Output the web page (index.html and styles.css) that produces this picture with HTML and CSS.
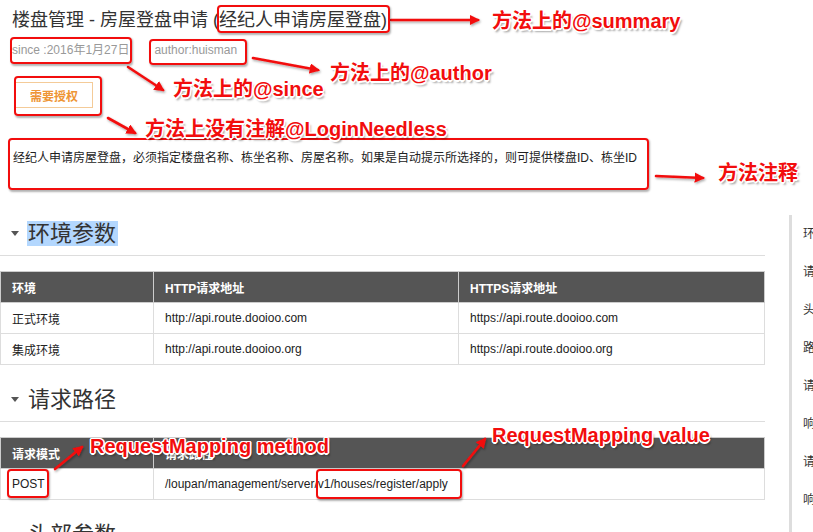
FILE: index.html
```html
<!DOCTYPE html>
<html lang="zh">
<head>
<meta charset="utf-8">
<title>楼盘管理 - 房屋登盘申请</title>
<link rel="stylesheet" href="styles.css">
</head>
<body>
<div class="page">
  <header class="head">
    <h1 class="title">楼盘管理 - 房屋登盘申请 (经纪人申请房屋登盘)</h1>
    <div class="meta"><span>since :2016年1月27日</span><span>author:huisman</span></div>
    <div class="auth"><span class="auth-btn">需要授权</span></div>
    <p class="desc">经纪人申请房屋登盘，必须指定楼盘名称、栋坐名称、房屋名称。如果是自动提示所选择的，则可提供楼盘ID、栋坐ID</p>
  </header>

  <div class="layout">
    <main class="main">
      <section class="sec">
        <h2 class="sec-title"><span class="caret"></span><span class="sel">环境参数</span></h2>
        <table class="tbl">
          <colgroup><col class="c1"><col class="c2"><col class="c3"></colgroup>
          <thead><tr><th>环境</th><th>HTTP请求地址</th><th>HTTPS请求地址</th></tr></thead>
          <tbody>
            <tr><td>正式环境</td><td>http://api.route.dooioo.com</td><td>https://api.route.dooioo.com</td></tr>
            <tr><td>集成环境</td><td>http://api.route.dooioo.org</td><td>https://api.route.dooioo.org</td></tr>
          </tbody>
        </table>
      </section>
      <section class="sec">
        <h2 class="sec-title"><span class="caret"></span><span>请求路径</span></h2>
        <table class="tbl">
          <colgroup><col class="c1"><col></colgroup>
          <thead><tr><th>请求模式</th><th>请求路径</th></tr></thead>
          <tbody>
            <tr><td>POST</td><td>/loupan/management/server/v1/houses/register/apply</td></tr>
          </tbody>
        </table>
      </section>
      <section class="sec">
        <h2 class="sec-title"><span class="caret"></span><span>头部参数</span></h2>
      </section>
    </main>
    <nav class="toc">
      <a>环境参数</a>
      <a>请求路径</a>
      <a>头部参数</a>
      <a>路径参数</a>
      <a>请求参数</a>
      <a>响应参数</a>
      <a>请求示例</a>
      <a>响应示例</a>
    </nav>
  </div>

  <div class="notes">
    <svg class="arrows" width="813" height="532" viewBox="0 0 813 532">
      <defs>
        <marker id="ah" viewBox="0 0 10 10" refX="8" refY="5" markerWidth="4" markerHeight="4" orient="auto">
          <path d="M0 0 L10 5 L0 10 z" fill="#f20d0d"/>
        </marker>
        <filter id="sh" x="-20%" y="-50%" width="140%" height="200%">
          <feDropShadow dx="1" dy="1.5" stdDeviation="1" flood-color="#000" flood-opacity="0.35"/>
        </filter>
      </defs>
      <g stroke="#f20d0d" stroke-width="2.6" fill="none" marker-end="url(#ah)" filter="url(#sh)" stroke-linecap="round">
        <line x1="391" y1="20" x2="478" y2="20"/>
        <line x1="253" y1="58" x2="318" y2="70"/>
        <line x1="128" y1="67" x2="163" y2="90"/>
        <line x1="108" y1="118" x2="135" y2="133"/>
        <line x1="656" y1="176" x2="703" y2="178"/>
        <line x1="55" y1="469" x2="82" y2="447"/>
        <line x1="463" y1="466" x2="485" y2="439"/>
      </g>
    </svg>
    <span class="box b-summary"></span>
    <span class="box b-since"></span>
    <span class="box b-author"></span>
    <span class="box b-auth"></span>
    <span class="box b-desc"></span>
    <span class="box b-post"></span>
    <span class="box b-value"></span>
    <span class="label l-summary">方法上的@summary</span>
    <span class="label l-author">方法上的@author</span>
    <span class="label l-since">方法上的@since</span>
    <span class="label l-login">方法上没有注解@LoginNeedless</span>
    <span class="label l-desc">方法注释</span>
    <span class="label l-method">RequestMapping method</span>
    <span class="label l-value">RequestMapping value</span>
  </div>
</div>
</body>
</html>
```

FILE: styles.css
```css
html, body {
  margin: 0;
  padding: 0;
  overflow: hidden;
  background: #fff;
}
body {
  font-family: "Liberation Sans", "Noto Sans CJK SC", sans-serif;
  font-size: 12px;
  color: #333;
}
.page {
  position: relative;
  width: 813px;
  height: 532px;
  overflow: hidden;
}

/* header */
.title {
  margin: 0;
  padding: 8px 0 0 12px;
  font-size: 18px;
  line-height: 24px;
  font-weight: normal;
  color: #333;
}
.meta {
  display: flex;
  gap: 25px;
  margin-top: 10px;
  padding-left: 12px;
  line-height: 16px;
  color: #999;
}
.auth {
  margin-top: 24px;
  padding-left: 15px;
}
.auth-btn {
  display: inline-flex;
  align-items: center;
  justify-content: center;
  box-sizing: border-box;
  width: 78px;
  height: 26px;
  border: 1px solid #f4cb98;
  color: #ee9535;
  font-weight: bold;
  font-size: 12px;
}
.desc {
  margin: 41px 0 0;
  padding-left: 13px;
  line-height: 18px;
  font-size: 12px;
  color: #222;
}

/* body layout */
.layout {
  display: flex;
  margin-top: 48px;
}
.main {
  width: 765px;
  flex-shrink: 0;
}
.toc {
  flex-shrink: 0;
  display: flex;
  flex-direction: column;
  margin-left: 24px;
  padding-left: 11px;
  border-left: 3px solid #ddd;
  white-space: nowrap;
  height: 400px;
}
.toc a {
  line-height: 38px;
  color: #333;
  font-size: 12px;
}

/* sections */
.sec-title {
  display: flex;
  align-items: center;
  margin: 6px 0 0;
  padding: 0 0 9px 11px;
  border-bottom: 1px solid #ddd;
  font-size: 22px;
  line-height: 25px;
  font-weight: normal;
  color: #333;
}
.sec + .sec .sec-title {
  margin-top: 22px;
}
.caret {
  width: 0;
  height: 0;
  border-top: 5px solid #555;
  border-left: 4px solid transparent;
  border-right: 4px solid transparent;
  margin-right: 9px;
}
.sel {
  background: #b3d7fe;
  padding: 0 2px 0 1px;
  margin-left: -1px;
}

/* tables */
.tbl {
  width: 765px;
  margin-top: 15px;
  border-collapse: collapse;
  table-layout: fixed;
}
.c1 { width: 153px; }
.c2 { width: 305px; }
.tbl th {
  background: #555;
  color: #fff;
  font-weight: bold;
  text-align: left;
  height: 31px;
  padding: 0 11px;
  border: 1px solid #ccc;
  box-sizing: border-box;
}
.tbl td {
  height: 31px;
  padding: 0 11px;
  border: 1px solid #ddd;
  color: #222;
  box-sizing: border-box;
}

/* annotation layer */
.notes {
  position: absolute;
  left: 0;
  top: 0;
  width: 813px;
  height: 532px;
  pointer-events: none;
}
.arrows {
  position: absolute;
  left: 0;
  top: 0;
}
.box {
  position: absolute;
  box-sizing: border-box;
  border: 2px solid #f20d0d;
  border-radius: 4px;
  box-shadow: 1px 1.5px 2px rgba(0, 0, 0, 0.3);
}
.b-summary { left: 217px; top: 5px; width: 173px; height: 28px; }
.b-since { left: 10px; top: 37px; width: 122px; height: 27px; }
.b-author { left: 149px; top: 39px; width: 98px; height: 26px; }
.b-auth { left: 14px; top: 76px; width: 88px; height: 40px; }
.b-desc { left: 8px; top: 138px; width: 641px; height: 52px; }
.b-post { left: 7px; top: 469px; width: 42px; height: 29px; }
.b-value { left: 316px; top: 469px; width: 146px; height: 30px; }

.label {
  position: absolute;
  white-space: nowrap;
  font-family: "Liberation Sans", "Noto Sans CJK SC", sans-serif;
  font-weight: bold;
  font-size: 20px;
  line-height: 24px;
  color: #f20d0d;
  text-shadow:
    -1.5px 0 0 #fff, 1.5px 0 0 #fff, 0 -1.5px 0 #fff, 0 1.5px 0 #fff,
    -1px -1px 0 #fff, 1px -1px 0 #fff, -1px 1px 0 #fff, 1px 1px 0 #fff,
    2px 2.5px 2px rgba(0, 0, 0, 0.35);
}
.l-summary { left: 492px; top: 9px; }
.l-author { left: 330px; top: 61px; }
.l-since { left: 173px; top: 77px; }
.l-login { left: 145px; top: 117px; }
.l-desc { left: 718px; top: 161px; }
.l-method { left: 90px; top: 434px; }
.l-value { left: 492px; top: 423px; }
```
